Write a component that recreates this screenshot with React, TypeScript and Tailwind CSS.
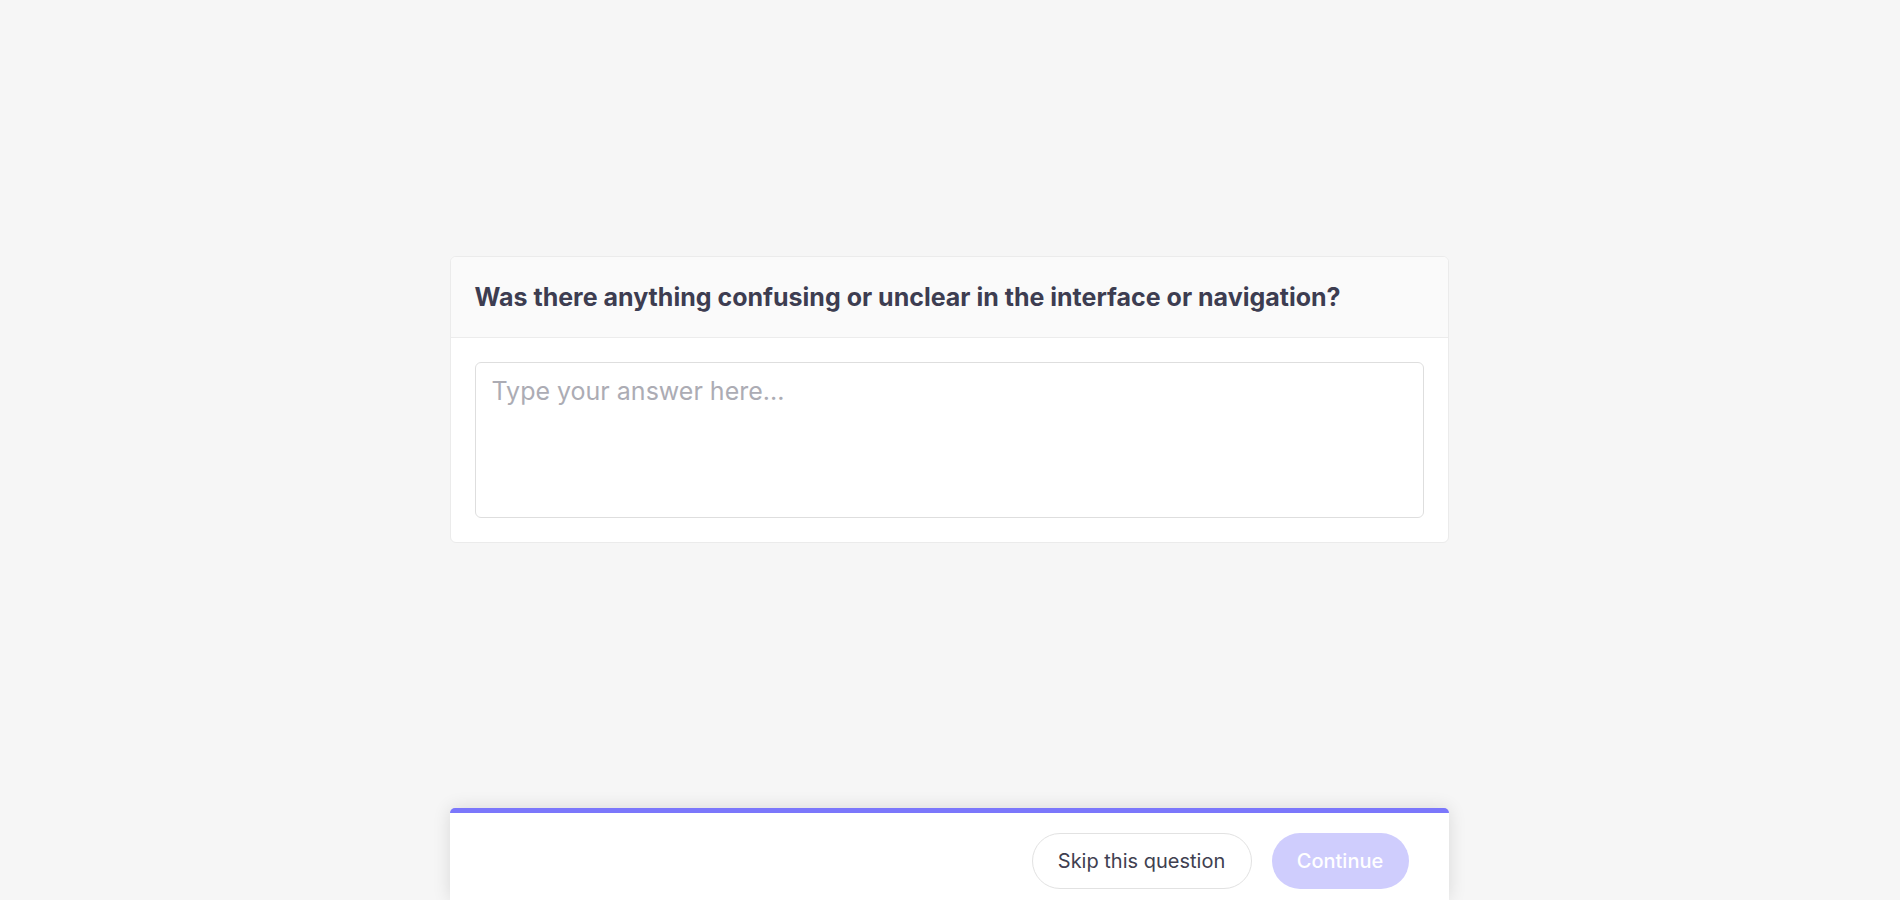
const App = () => {
  return (
    <div className="h-screen flex flex-col bg-[#f6f6f6] font-['Inter',sans-serif] overflow-hidden">
      {/* Question card */}
      <main className="flex-1 flex items-center justify-center pb-[9px] pr-[2px]">
        <div className="w-[999px] bg-white border border-[#ebebeb] rounded-md overflow-hidden">
          <div className="bg-[#fafafa] border-b border-[#ececec] px-6 h-[81px] flex items-center">
            <h2 className="text-[25px] font-bold text-[#3d3d51] leading-none">
              Was there anything confusing or unclear in the interface or navigation?
            </h2>
          </div>
          <div className="p-6">
            <textarea
              placeholder="Type your answer here..."
              className="block w-full h-[156px] resize-none border border-[#dedede] rounded-md px-4 py-3 text-[25px] leading-8 text-[#3b3b4f] placeholder:text-[#acacb4] outline-none"
            />
          </div>
        </div>
      </main>

      {/* Footer action bar */}
      <div className="flex justify-center pr-[2px]">
        <div className="w-[999px] h-[92px] bg-white rounded-t-[5px] border-t-[5px] border-[#7b77fb] shadow-[0_0_18px_rgba(0,0,0,0.12)] flex items-start justify-end gap-5 pt-5 pr-10">
          <button className="h-14 w-[220px] rounded-full border border-[#e2e2e2] bg-white text-[20px] text-[#404050]">
            Skip this question
          </button>
          <button className="h-14 w-[137px] rounded-full bg-[#cfcdfd] text-[20px] font-medium text-white">
            Continue
          </button>
        </div>
      </div>
    </div>
  );
};

export default App;
